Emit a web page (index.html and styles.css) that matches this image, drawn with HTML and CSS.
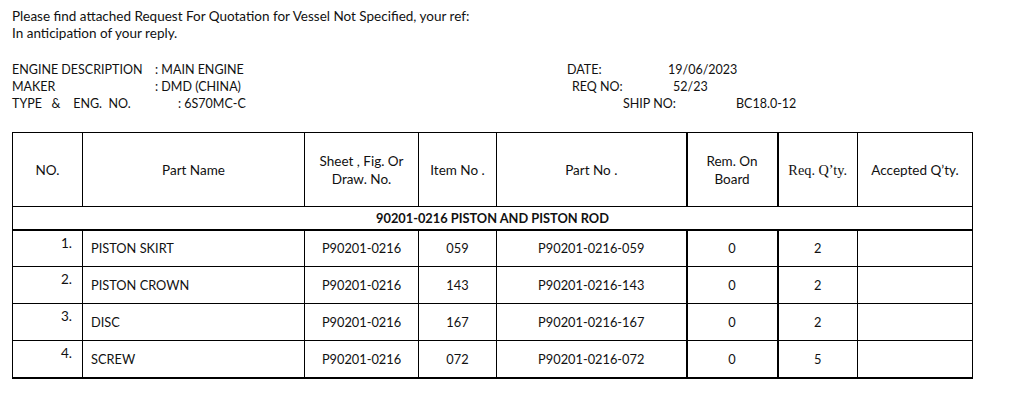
FILE: index.html
```html
<!DOCTYPE html>
<html>
<head>
<meta charset="utf-8">
<link rel="stylesheet" href="styles.css">
</head>
<body>
<div class="page">
  <div class="intro">
    <div>Please find attached Request For Quotation for Vessel Not Specified, your ref:</div>
    <div>In anticipation of your reply.</div>
  </div>
  <div class="info">
    <div class="info-left">
      <div class="line"><span class="lab l1">ENGINE DESCRIPTION</span><span>: MAIN ENGINE</span></div>
      <div class="line"><span class="lab l1">MAKER</span><span>: DMD (CHINA)</span></div>
      <div class="line"><span class="lab l2">TYPE &nbsp; &amp; &nbsp;&nbsp; ENG.&nbsp; NO.</span><span>: 6S70MC-C</span></div>
    </div>
    <div class="info-right">
      <div class="line"><span class="rlab r1">DATE:</span><span>19/06/2023</span></div>
      <div class="line"><span class="rlab r2">REQ NO:</span><span>52/23</span></div>
      <div class="line"><span class="rlab r3">SHIP NO:</span><span>BC18.0-12</span></div>
    </div>
  </div>
  <table class="rfq">
    <colgroup>
      <col class="c1"><col class="c2"><col class="c3"><col class="c4"><col class="c5"><col class="c6"><col class="c7"><col class="c8">
    </colgroup>
    <thead>
      <tr class="head">
        <th>NO.</th>
        <th>Part Name</th>
        <th>Sheet , Fig. Or<br>Draw. No.</th>
        <th>Item No .</th>
        <th>Part No .</th>
        <th class="thick-l">Rem. On<br>Board</th>
        <th class="thick-l serif">Req. Q’ty.</th>
        <th>Accepted Q’ty.</th>
      </tr>
    </thead>
    <tbody>
      <tr class="section"><td colspan="8">90201-0216 PISTON AND PISTON ROD</td></tr>
      <tr class="row"><td class="num">1.</td><td class="name">PISTON SKIRT</td><td>P90201-0216</td><td>059</td><td>P90201-0216-059</td><td class="thick-l">0</td><td class="thick-l">2</td><td></td></tr>
      <tr class="row"><td class="num">2.</td><td class="name">PISTON CROWN</td><td>P90201-0216</td><td>143</td><td>P90201-0216-143</td><td class="thick-l">0</td><td class="thick-l">2</td><td></td></tr>
      <tr class="row"><td class="num">3.</td><td class="name">DISC</td><td>P90201-0216</td><td>167</td><td>P90201-0216-167</td><td class="thick-l">0</td><td class="thick-l">2</td><td></td></tr>
      <tr class="row last"><td class="num">4.</td><td class="name">SCREW</td><td>P90201-0216</td><td>072</td><td>P90201-0216-072</td><td class="thick-l">0</td><td class="thick-l">5</td><td></td></tr>
    </tbody>
  </table>
</div>
</body>
</html>
```

FILE: styles.css
```css
html, body {
  margin: 0;
  padding: 0;
  background: #fff;
}
body {
  font-family: Lato, "Liberation Sans", Arial, sans-serif;
  font-size: 13.5px;
  color: #111;
}
.page {
  padding: 8px 0 0 12px;
}
.intro {
  line-height: 17px;
}
.info {
  display: flex;
  margin-top: 19px;
  line-height: 17px;
  font-size: 12.5px;
}
.info-left {
  width: 555px;
}
.line {
  display: flex;
  white-space: nowrap;
}
.lab.l1 { width: 143px; }
.lab.l2 { width: 166px; }
.rlab { display: inline-block; }
.r1 { width: 101px; }
.r2 { width: 101px; margin-left: 5px; }
.r3 { width: 113px; margin-left: 56px; }

.rfq {
  margin-top: 20px;
  border-collapse: collapse;
  table-layout: fixed;
  width: 960px;
  font-size: 12.8px;
}
.c1 { width: 70px; }
.c2 { width: 222px; }
.c3 { width: 114px; }
.c4 { width: 78px; }
.c5 { width: 190px; }
.c6 { width: 91px; }
.c7 { width: 80px; }
.c8 { width: 115px; }
.rfq th, .rfq td {
  border: 1px solid #000;
  padding: 0;
  text-align: center;
  font-weight: normal;
  vertical-align: middle;
}
.rfq .thick-l {
  border-left: 2px solid #000;
}
.head {
  height: 74px;
}
.head th {
  line-height: 18px;
  font-size: 13.5px;
}
.rfq th.serif {
  font-family: "Liberation Serif", "Times New Roman", serif;
  font-size: 14.3px;
}
.section {
  height: 23px;
}
.section td {
  font-weight: bold;
  border-bottom: 2px solid #000;
}
.row {
  height: 37px;
}
.row.last td {
  border-bottom: 2px solid #000;
}
.rfq td.num {
  text-align: right;
  vertical-align: top;
  padding: 4px 10px 0 0;
  font-size: 13.5px;
}
.rfq td.name {
  text-align: left;
  padding-left: 8px;
}
```
